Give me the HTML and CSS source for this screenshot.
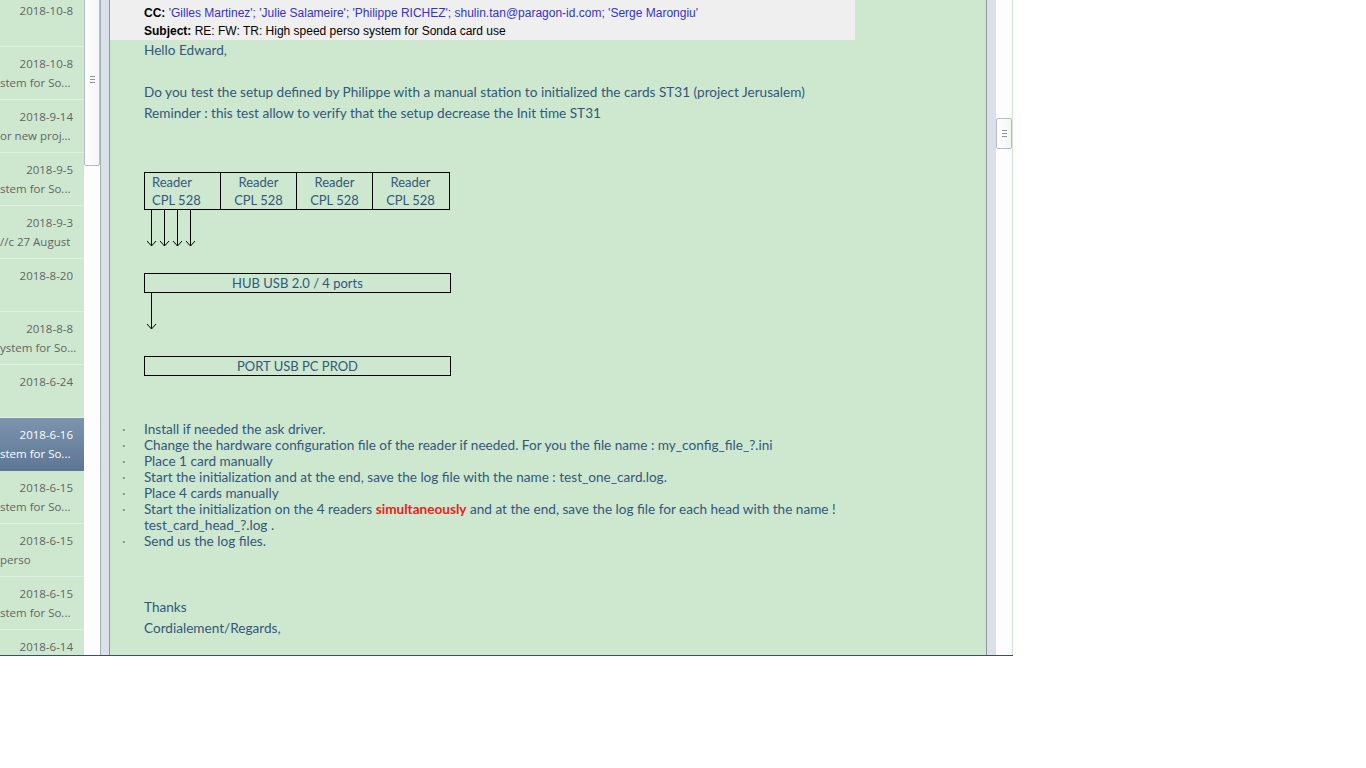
FILE: index.html
```html
<!DOCTYPE html>
<html>
<head>
<meta charset="utf-8">
<link rel="stylesheet" href="styles.css">
</head>
<body>
<div class="window">
  <div class="list">
    <div class="item"><div class="date">2018-10-8</div><div class="subj"></div></div>
    <div class="item"><div class="date">2018-10-8</div><div class="subj">stem for So...</div></div>
    <div class="item"><div class="date">2018-9-14</div><div class="subj">or new proj...</div></div>
    <div class="item"><div class="date">2018-9-5</div><div class="subj">stem for So...</div></div>
    <div class="item"><div class="date">2018-9-3</div><div class="subj">//c 27 August</div></div>
    <div class="item"><div class="date">2018-8-20</div><div class="subj"></div></div>
    <div class="item"><div class="date">2018-8-8</div><div class="subj">ystem for So...</div></div>
    <div class="item"><div class="date">2018-6-24</div><div class="subj"></div></div>
    <div class="item selected"><div class="date">2018-6-16</div><div class="subj">stem for So...</div></div>
    <div class="item"><div class="date">2018-6-15</div><div class="subj">stem for So...</div></div>
    <div class="item"><div class="date">2018-6-15</div><div class="subj">perso</div></div>
    <div class="item"><div class="date">2018-6-15</div><div class="subj">stem for So...</div></div>
    <div class="item"><div class="date">2018-6-14</div><div class="subj"></div></div>
  </div>
  <div class="vscroll left-scroll"><div class="thumb thumb-list"><span class="grip"></span></div></div>
  <div class="gutter"></div>
  <div class="main">
    <div class="header">
      <div class="hline"><b>CC:</b> <span class="addr">'Gilles Martinez'; 'Julie Salameire'; 'Philippe RICHEZ'; shulin.tan@paragon-id.com; 'Serge Marongiu'</span></div>
      <div class="hline"><b>Subject:</b> RE: FW: TR: High speed perso system for Sonda card use</div>
    </div>
    <div class="body">
      <p class="p">Hello Edward,</p>
      <p class="p gap">Do you test the setup defined by Philippe with a manual station to initialized the cards ST31 (project Jerusalem)</p>
      <p class="p">Reminder : this test allow to verify that the setup decrease the Init time ST31</p>

      <div class="readers">
        <div class="cell first">Reader<br>CPL 528</div>
        <div class="cell">Reader<br>CPL 528</div>
        <div class="cell">Reader<br>CPL 528</div>
        <div class="cell">Reader<br>CPL 528</div>
      </div>
      <div class="arrows">
        <svg width="60" height="38" viewBox="0 0 60 38">
          <g stroke="#000" stroke-width="1" fill="none">
            <path d="M7.5 0V36M3 31l4.5 5 4.5-5"/>
            <path d="M20.5 0V36M16 31l4.5 5 4.5-5"/>
            <path d="M33.5 0V36M29 31l4.5 5 4.5-5"/>
            <path d="M46.5 0V36M42 31l4.5 5 4.5-5"/>
          </g>
        </svg>
      </div>
      <div class="box hub">HUB USB 2.0 / 4 ports</div>
      <div class="arrows one">
        <svg width="20" height="38" viewBox="0 0 20 38">
          <g stroke="#000" stroke-width="1" fill="none">
            <path d="M7.5 0V36M3 31l4.5 5 4.5-5"/>
          </g>
        </svg>
      </div>
      <div class="box port">PORT USB PC PROD</div>

      <ul class="steps">
        <li>Install if needed the ask driver.</li>
        <li>Change the hardware configuration file of the reader if needed. For you the file name : my_config_file_?.ini</li>
        <li>Place 1 card manually</li>
        <li>Start the initialization and at the end, save the log file with the name : test_one_card.log.</li>
        <li>Place 4 cards manually</li>
        <li>Start the initialization on the 4 readers <b class="red">simultaneously</b> and at the end, save the log file for each head with the name !<br>test_card_head_?.log .</li>
        <li>Send us the log files.</li>
      </ul>

      <p class="p thanks">Thanks</p>
      <p class="p">Cordialement/Regards,</p>
    </div>
  </div>
  <div class="gutter right-gutter"></div>
  <div class="vscroll right-scroll"><div class="thumb thumb-main"><span class="grip"></span></div></div>
</div>
</body>
</html>
```
FILE: styles.css
```css
html, body {
  margin: 0;
  padding: 0;
  background: #ffffff;
}
.window {
  display: flex;
  width: 1013px;
  height: 655px;
  border-bottom: 1px solid #3d4f5c;
  overflow: hidden;
  background: #cde8cf;
}
.list {
  width: 84px;
  flex: none;
  margin-top: -6px;
  font-family: "Open Sans", "Noto Sans", sans-serif;
  font-size: 11.5px;
  color: #646464;
}
.item {
  height: 52px;
  border-bottom: 1px solid #dff0e0;
  position: relative;
  overflow: hidden;
}
.item .date {
  text-align: right;
  padding-right: 11px;
  height: 19px;
  line-height: 19px;
  padding-top: 7px;
}
.item .subj {
  white-space: nowrap;
  height: 19px;
  line-height: 19px;
}
.item.selected {
  background: linear-gradient(#7d94ae, #5e7795);
  color: #ffffff;
  border-bottom-color: #5e7795;
}
.vscroll {
  width: 16px;
  flex: none;
  background: #fdfdfd;
  position: relative;
}
.thumb {
  position: absolute;
  left: 0;
  width: 14px;
  background: linear-gradient(90deg, #ffffff, #f3f5f7);
  border: 1px solid #b4bcc4;
  border-radius: 2px;
  display: flex;
  align-items: center;
  justify-content: center;
}
.thumb-list {
  top: -3px;
  height: 167px;
}
.thumb-main {
  top: 118px;
  height: 29px;
}
.grip {
  width: 5px;
  height: 5px;
  border-top: 1px solid #8a949e;
  border-bottom: 1px solid #8a949e;
  position: relative;
}
.grip::after {
  content: "";
  position: absolute;
  left: 0;
  right: 0;
  top: 2px;
  height: 1px;
  background: #8a949e;
}
.thumb-list .grip { margin-top: -4px; }
.gutter {
  width: 9px;
  flex: none;
  background: #d9e0e7;
  border-left: 1px solid #a6aeb6;
}
.left-scroll + .gutter {
  border-right: 1px solid #8e979f;
  width: 8px;
}
.main {
  width: 876px;
  flex: none;
  background: #cde8cf;
}
.right-gutter {
  border-left: 1px solid #8e979f;
  width: 9px;
}
.header {
  width: 711px;
  background: #efefef;
  padding-left: 34px;
  font-family: Tahoma, "Liberation Sans", sans-serif;
  font-size: 12px;
  color: #000;
  box-sizing: content-box;
  padding-top: 4px;
  height: 36px;
}
.hline {
  height: 18px;
  line-height: 18px;
  white-space: nowrap;
}
.addr { color: #3333cc; }
.body {
  padding-left: 34px;
  font-family: Lato, "Open Sans", sans-serif;
  font-size: 13.6px;
  color: #33577c;
}
.p {
  margin: 0;
  height: 21px;
  line-height: 21px;
}
.p.gap { margin-top: 21px; }
.readers {
  margin-top: 48px;
  display: flex;
  width: 304px;
  border: 1px solid #000;
  height: 36px;
}
.cell {
  width: 75px;
  border-left: 1px solid #000;
  text-align: center;
  line-height: 18px;
  font-size: 13px;
}
.cell.first {
  border-left: 0;
  text-align: left;
  padding-left: 7px;
  width: 68px;
}
.arrows {
  height: 38px;
  line-height: 0;
}
.arrows svg { display: block; }
.box {
  width: 305px;
  border: 1px solid #000;
  height: 18px;
  line-height: 18px;
  text-align: center;
  font-size: 13px;
}
.hub { margin-top: 25px; }
.port { margin-top: 25px; }
.steps {
  margin: 45px 0 0 0;
  padding: 0;
  list-style: none;
  line-height: 16px;
  width: 720px;
}
.steps li {
  position: relative;
}
.steps li::before {
  content: "·";
  position: absolute;
  left: -22px;
  top: 0;
  color: #7a8fa4;
}
.red {
  color: #e8231c;
  font-weight: 700;
}
.thanks { margin-top: 48px; }
```
